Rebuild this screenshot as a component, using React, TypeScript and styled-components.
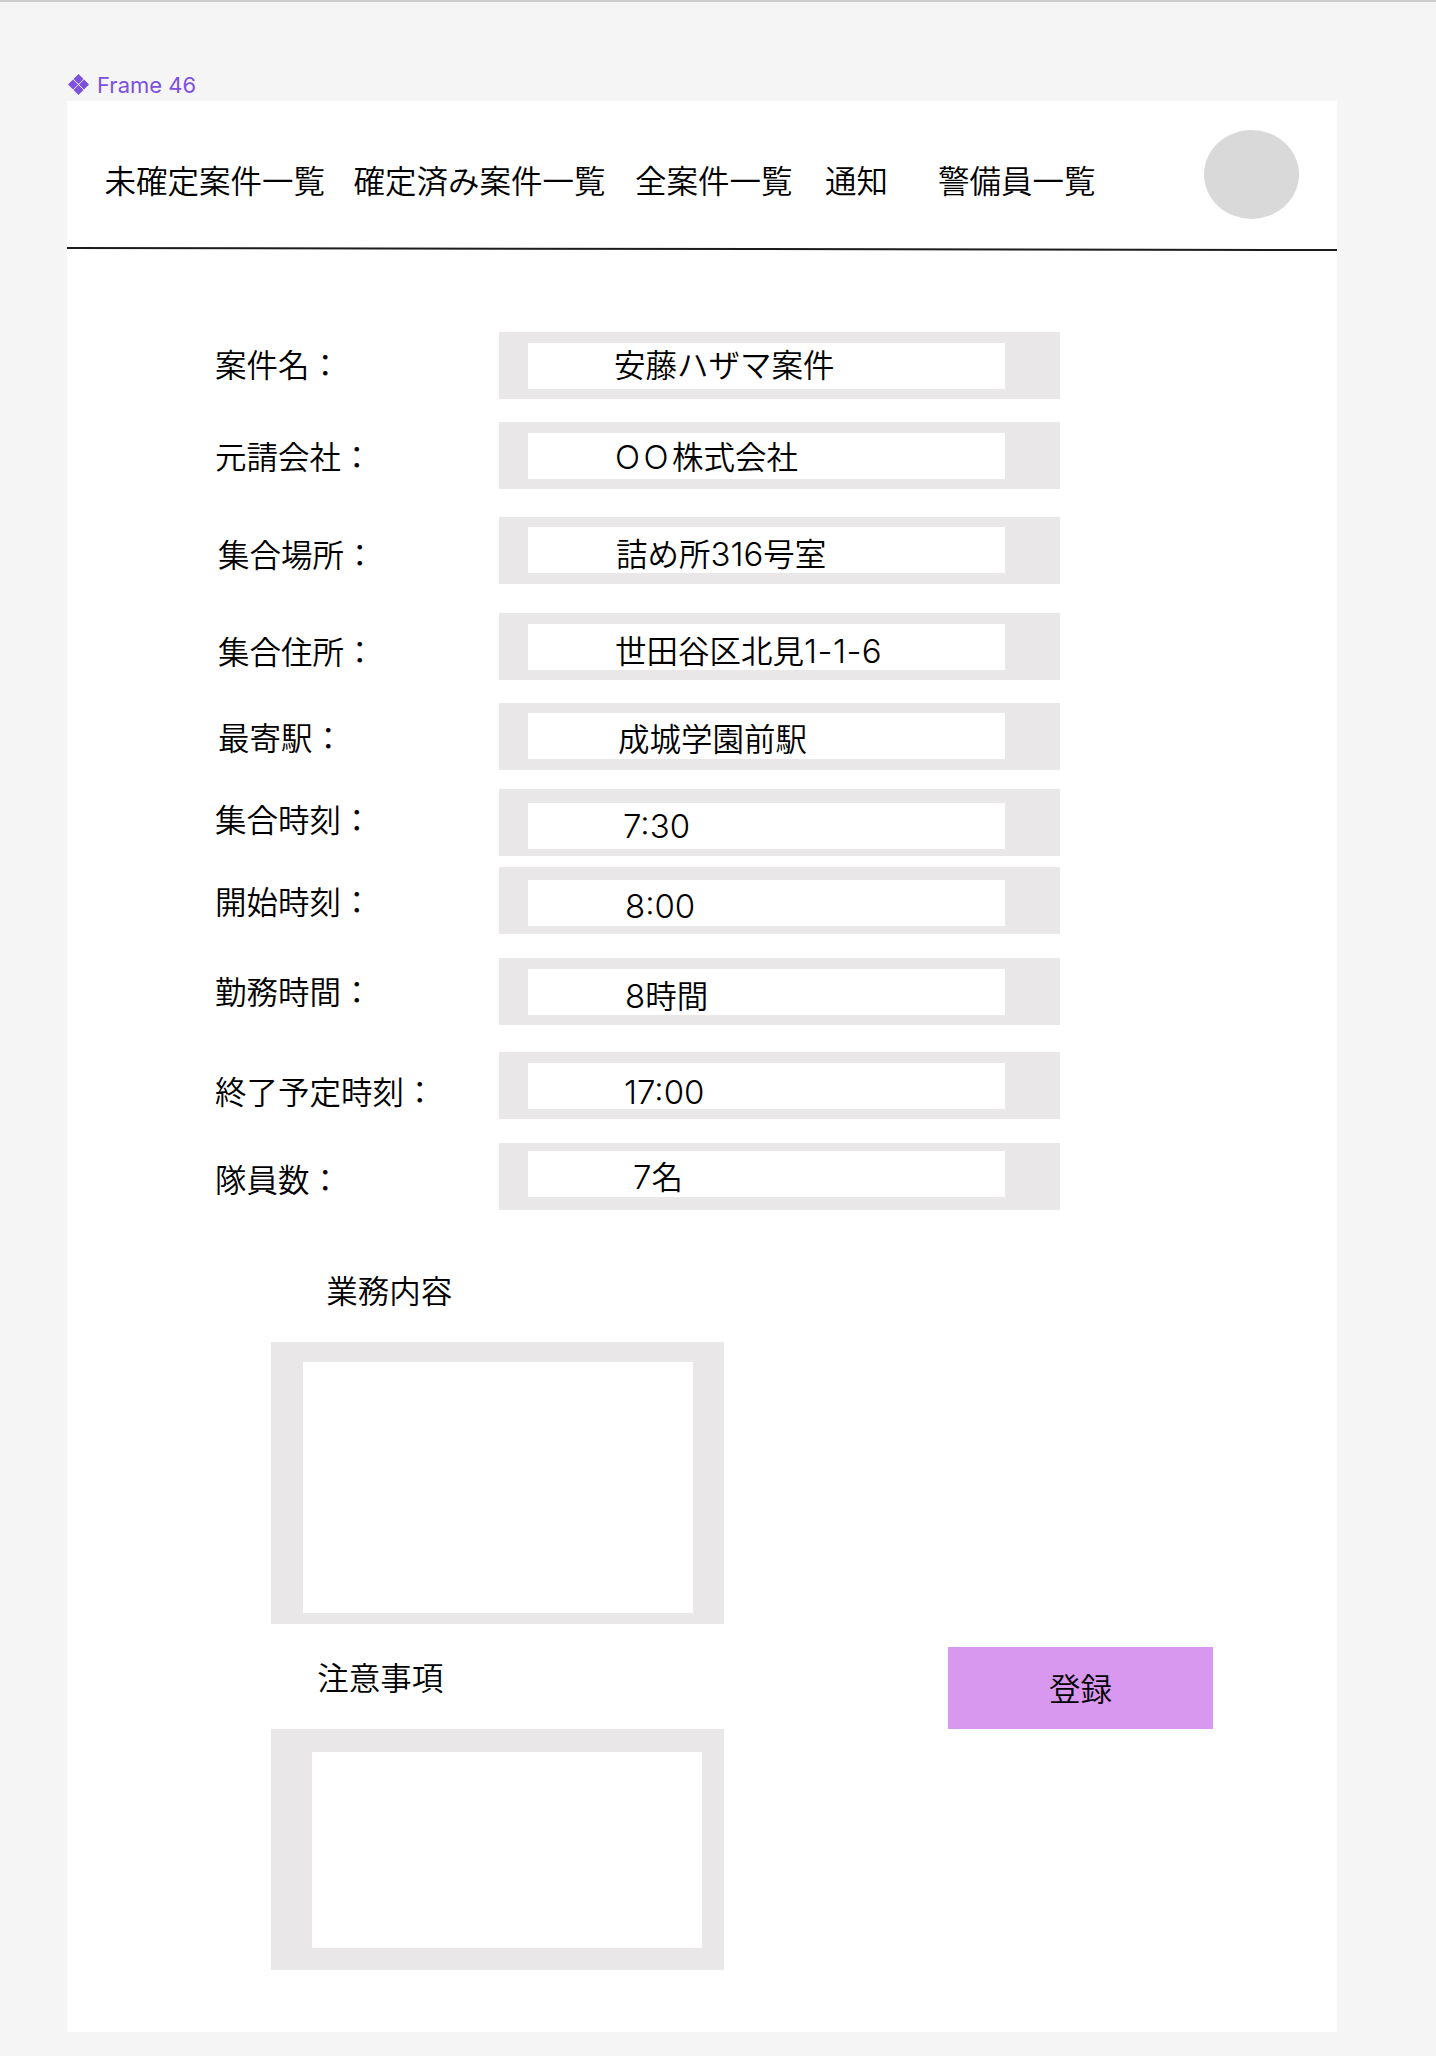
import React from 'react'
import styled, { createGlobalStyle } from 'styled-components'

const GlobalStyle = createGlobalStyle`
	html, body {
		margin: 0;
		padding: 0;
		background: #f5f5f5;
	}

	body {
		color: #000;
		font-family: "Noto Sans CJK JP", "Liberation Sans", sans-serif;
		font-size: 31.5px;
		font-weight: 350;
		line-height: 1;
	}
`

// latin runs sit a little bigger than the kanji around them
const Latin = styled.span<{ $spacing?: number }>`
	font-family: Inter, sans-serif;
	font-size: 33px;
	letter-spacing: ${ props => props.$spacing || 0 }px;
`

const navItems = [
	{ text: '未確定案件一覧', gap: 0 },
	{ text: '確定済み案件一覧', gap: 28.5 },
	{ text: '全案件一覧', gap: 29.5 },
	{ text: '通知', gap: 32.5 },
	{ text: '警備員一覧', gap: 50 }
]

// the rows in the mock are hand placed, so each one carries its own offsets
const fields = [
	{ label: '案件名：', value: '安藤ハザマ案件', top: 82, inset: 11.3, labelX: 148, labelY: 16, valueX: 86, valueY: 7.4 },
	{ label: '元請会社：', value: <><Latin $spacing={ 3.5 }>OO</Latin>株式会社</>, top: 23.7, inset: 11.3, labelX: 148, labelY: 17.6, valueX: 87, valueY: 7.2 },
	{ label: '集合場所：', value: <>詰め所<Latin>316</Latin>号室</>, top: 28, inset: 10.3, labelX: 151, labelY: 21.3, valueX: 88, valueY: 11 },
	{ label: '集合住所：', value: <>世田谷区北見<Latin $spacing={ 0.5 }>1-1-6</Latin></>, top: 28.6, inset: 11, labelX: 151, labelY: 22.3, valueX: 87, valueY: 11 },
	{ label: '最寄駅：', value: '成城学園前駅', top: 23.4, inset: 10, labelX: 151, labelY: 17.8, valueX: 90, valueY: 11.3 },
	{ label: '集合時刻：', value: <Latin>7:30</Latin>, top: 19.3, inset: 13.3, labelX: 148, labelY: 13.3, valueX: 95, valueY: 7.5 },
	{ label: '開始時刻：', value: <Latin>8:00</Latin>, top: 11, inset: 13, labelX: 148, labelY: 17.3, valueX: 97, valueY: 9.3 },
	{ label: '勤務時間：', value: <><Latin>8</Latin>時間</>, top: 23.7, inset: 11.3, labelX: 148, labelY: 16.6, valueX: 97, valueY: 10.7 },
	{ label: '終了予定時刻：', value: <Latin>17:00</Latin>, top: 26.6, inset: 11.7, labelX: 148, labelY: 23.5, valueX: 96, valueY: 12.2 },
	{ label: '隊員数：', value: <><Latin>7</Latin>名</>, top: 24, inset: 8.7, labelX: 148, labelY: 20, valueX: 105, valueY: 10 }
]

const Page = styled.div`
	display: flex;
	flex-direction: column;
	height: 2056px;
	overflow: hidden;
`

const TopStrip = styled.div`
	background: #cccccc;
	flex: none;
	height: 2px;
`

const FrameTag = styled.div`
	align-items: center;
	color: #7d50e0;
	display: flex;
	flex: none;
	font-family: Inter, "Liberation Sans", sans-serif;
	font-size: 22px;
	font-weight: 400;
	gap: 8px;
	height: 27px;
	margin-bottom: 3px;
	margin-top: 69px;
	padding: 0 0 0 68px;
`

const Frame = styled.div`
	background: #fff;
	flex: none;
	height: 1931px;
	margin-left: 67px;
	width: 1270px;
`

const Header = styled.header`
	align-items: flex-start;
	display: flex;
	height: 147px;
	padding: 0 38.5px 0 37.5px;
`

const Nav = styled.nav`
	display: flex;
	padding-top: 63px;
`

const NavItem = styled.span<{ $gap: number }>`
	margin-left: ${ props => props.$gap }px;
	white-space: nowrap;
`

const Avatar = styled.div`
	background: #d9d9d9;
	border-radius: 50%;
	height: 89px;
	margin-left: auto;
	margin-top: 29px;
	width: 95px;
`

const Divider = styled.div`
	background: #1c1c1c;
	height: 1.5px;
	transform: rotate(0.09deg);
`

const Form = styled.div`
	display: flex;
	flex-direction: column;
`

const FieldRow = styled.div<{ $top: number }>`
	align-items: flex-start;
	display: flex;
	margin-top: ${ props => props.$top }px;
`

const FieldLabel = styled.div<{ $x: number; $y: number }>`
	box-sizing: border-box;
	flex: none;
	padding-left: ${ props => props.$x }px;
	padding-top: ${ props => props.$y }px;
	white-space: nowrap;
	width: 432px;
`

const FieldBox = styled.div<{ $inset: number }>`
	background: #e9e7e8;
	box-sizing: border-box;
	height: 67px;
	padding: ${ props => props.$inset }px 0 0 29px;
	width: 561px;
`

const FieldInput = styled.div<{ $x: number; $y: number }>`
	background: #fff;
	box-sizing: border-box;
	font-family: Inter, "Noto Sans CJK JP", sans-serif;
	height: 46px;
	padding-left: ${ props => props.$x }px;
	padding-top: ${ props => props.$y }px;
	white-space: nowrap;
	width: 477px;
`

const Lower = styled.div`
	align-items: flex-start;
	display: flex;
	margin-left: 204.3px;
	margin-top: 64px;
`

const Notes = styled.div`
	display: flex;
	flex: none;
	flex-direction: column;
	width: 453px;
`

const NoteLabel = styled.div<{ $x: number; $top?: number }>`
	margin-top: ${ props => props.$top || 0 }px;
	padding-left: ${ props => props.$x }px;
`

const NoteBox = styled.div<{ $height: number; $x: number; $y: number }>`
	background: #e9e7e8;
	box-sizing: border-box;
	height: ${ props => props.$height }px;
	margin-top: 36.5px;
	padding: ${ props => props.$y }px 0 0 ${ props => props.$x }px;
`

const NoteInput = styled.div<{ $height: number }>`
	background: #fff;
	height: ${ props => props.$height }px;
	width: 390px;
`

const SubmitButton = styled.button`
	background: #d998f0;
	border: 0;
	color: #000;
	flex: none;
	font: inherit;
	height: 82px;
	margin-left: 223.5px;
	margin-top: 373px;
	padding: 0;
	width: 265.5px;
`

const App = () => (
	<Page>
		<GlobalStyle />
		<TopStrip />
		<FrameTag>
			<svg width="21" height="21" viewBox="0 0 21 21" fill="currentColor">
				<path d="M10.5 0l5 5-5 5-5-5z" />
				<path d="M10.5 11l5 5-5 5-5-5z" />
				<path d="M5 5.5l5 5-5 5-5-5z" />
				<path d="M16 5.5l5 5-5 5-5-5z" />
			</svg>
			Frame 46
		</FrameTag>
		<Frame>
			<Header>
				<Nav>
					{navItems.map(item => (
						<NavItem key={ item.text } $gap={ item.gap }>{item.text}</NavItem>
					))}
				</Nav>
				<Avatar />
			</Header>
			<Divider />
			<Form>
				{fields.map(field => (
					<FieldRow key={ field.label } $top={ field.top }>
						<FieldLabel $x={ field.labelX } $y={ field.labelY }>{field.label}</FieldLabel>
						<FieldBox $inset={ field.inset }>
							<FieldInput $x={ field.valueX } $y={ field.valueY }>{field.value}</FieldInput>
						</FieldBox>
					</FieldRow>
				))}
			</Form>
			<Lower>
				<Notes>
					<NoteLabel $x={ 55 }>業務内容</NoteLabel>
					<NoteBox $height={ 282 } $x={ 32 } $y={ 20 }>
						<NoteInput $height={ 251 } />
					</NoteBox>
					<NoteLabel $x={ 46 } $top={ 37 }>注意事項</NoteLabel>
					<NoteBox $height={ 241 } $x={ 41 } $y={ 23 }>
						<NoteInput $height={ 196 } />
					</NoteBox>
				</Notes>
				<SubmitButton>登録</SubmitButton>
			</Lower>
		</Frame>
	</Page>
)

export default App
